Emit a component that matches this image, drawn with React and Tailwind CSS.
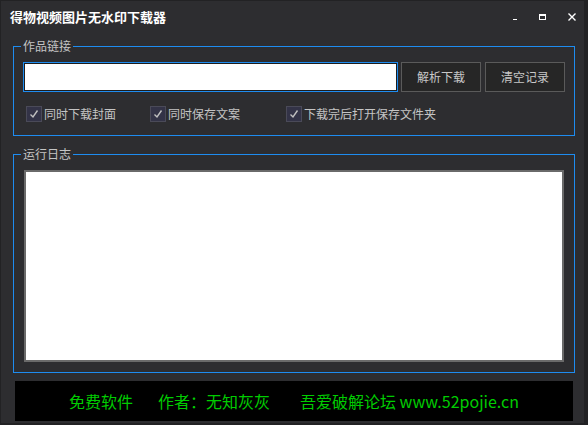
import React from 'react';

const font = "font-['Noto_Sans_CJK_SC','Noto_Sans',sans-serif]";

function Check({ label }) {
  return (
    <label className="flex items-center">
      <span className="flex h-[16px] w-[16px] items-center justify-center border border-[#4a4a58] bg-[#333347]">
        <svg width="10" height="10" viewBox="0 0 10 10">
          <path d="M1.5 5.5 L4 8 L8.5 1.5" fill="none" stroke="#c0c0c0" strokeWidth="1.4" />
        </svg>
      </span>
      <span className="ml-[2px] text-[12px] leading-[16px] text-[#c4c4c4]">{label}</span>
    </label>
  );
}

export default function App() {
  return (
    <div className={`${font} flex h-[425px] w-[588px] flex-col border-t border-l border-r-4 border-b-2 border-[#222224] bg-[#2d2d30]`}>
      {/* title bar */}
      <div className="flex h-[31px] items-center justify-between pl-[9px]">
        <span className="pt-[1px] text-[13px] font-bold leading-[16px] text-white">得物视频图片无水印下载器</span>
        <div className="flex items-center">
          <span className="mr-[22px] mt-[5px] h-[1px] w-[4px] bg-white" />
          <span className="mr-[22px] h-[6px] w-[7px] border border-t-2 border-white" />
          <svg className="mr-[8px]" width="8" height="8" viewBox="0 0 8 8">
            <path d="M0.5 0.5 L7.5 7.5 M7.5 0.5 L0.5 7.5" stroke="white" strokeWidth="1.4" />
          </svg>
        </div>
      </div>

      {/* 作品链接 */}
      <fieldset className="ml-[12px] mt-[6px] h-[98px] w-[562px] border border-[#1e8cf0] p-0">
        <legend className="ml-[7px] px-[2px] text-[12px] leading-[16px] text-[#c4c4c4]">作品链接</legend>
        <div className="flex pl-[9px] pt-[8px]">
          <div className="h-[30px] w-[375px] border border-[#1e8cf0]">
            <input className="h-full w-full border border-[#1e1e1e] bg-white outline-none" />
          </div>
          <button className="ml-[3px] h-[30px] w-[80px] border border-[#5a5a5a] bg-[#262626] text-[12px] text-[#c8c8c8]">解析下载</button>
          <button className="ml-[4px] h-[30px] w-[80px] border border-[#5a5a5a] bg-[#262626] text-[12px] text-[#c8c8c8]">清空记录</button>
        </div>
        <div className="flex pl-[12px] pt-[14px]">
          <div className="w-[124px]"><Check label="同时下载封面" /></div>
          <div className="w-[136px]"><Check label="同时保存文案" /></div>
          <Check label="下载完后打开保存文件夹" />
        </div>
      </fieldset>

      {/* 运行日志 */}
      <fieldset className="ml-[12px] mt-[10px] h-[227px] w-[562px] border border-[#1e8cf0] p-0">
        <legend className="ml-[7px] px-[2px] text-[12px] leading-[16px] text-[#c4c4c4]">运行日志</legend>
        <div className="px-[10px] pt-[8px]">
          <div className="h-[192px] border-2 border-[#6a6a6a] bg-white" />
        </div>
      </fieldset>

      {/* footer */}
      <div className="ml-[14px] mt-[8px] flex h-[40px] w-[558px] items-center justify-center bg-black text-[16px] leading-[20px] text-[#00cc00]">
        <span>免费软件</span>
        <span className="ml-[25px]">作者：无知灰灰</span>
        <span className="ml-[30px]">吾爱破解论坛 www.52pojie.cn</span>
      </div>
    </div>
  );
}
